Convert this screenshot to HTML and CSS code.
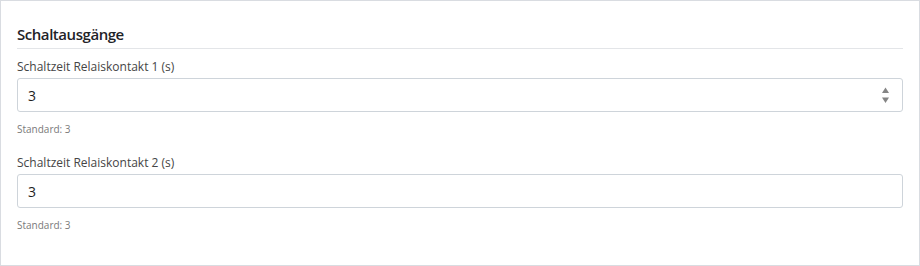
FILE: index.html
```html
<!DOCTYPE html>
<html lang="de">
<head>
<meta charset="utf-8">
<link rel="stylesheet" href="styles.css">
</head>
<body>
<div class="card">
  <h2 class="section-title">Schaltausgänge</h2>
  <div class="field">
    <label class="field-label">Schaltzeit Relaiskontakt 1 (s)</label>
    <div class="input has-spinner">
      <span class="value">3</span>
      <svg class="spinner" width="7" height="17" viewBox="0 0 7 17">
        <path d="M3.5 0.5 L7 6 L0 6 Z" fill="#858585"/>
        <path d="M0 10.5 L7 10.5 L3.5 16 Z" fill="#858585"/>
      </svg>
    </div>
    <div class="help">Standard: 3</div>
  </div>
  <div class="field">
    <label class="field-label">Schaltzeit Relaiskontakt 2 (s)</label>
    <div class="input">
      <span class="value">3</span>
    </div>
    <div class="help">Standard: 3</div>
  </div>
</div>
</body>
</html>
```
FILE: styles.css
```css
html, body {
  margin: 0;
  padding: 0;
  background: #ffffff;
}
body {
  font-family: "Open Sans", "Noto Sans", sans-serif;
  color: #212529;
}
.card {
  box-sizing: border-box;
  width: 920px;
  height: 266px;
  border: 1px solid #d9dce1;
  padding: 0 16px;
}
.section-title {
  margin: 24px 0 0;
  font-size: 15px;
  line-height: 18px;
  font-weight: 600;
  letter-spacing: -0.45px;
  color: #1f2328;
  padding-bottom: 5px;
  border-bottom: 1px solid #e3e5e8;
}
.field {
  display: flex;
  flex-direction: column;
}
.field-label {
  margin-top: 9px;
  font-size: 12px;
  line-height: 18px;
  color: #454545;
  display: block;
}
.input {
  box-sizing: border-box;
  margin-top: 2px;
  height: 34px;
  border: 1px solid #ced4da;
  border-radius: 3px;
  display: flex;
  align-items: center;
  justify-content: space-between;
  padding: 0 13px 0 10px;
}
.value {
  font-size: 14px;
  color: #1f1f1f;
}
.spinner {
  display: block;
}
.help {
  margin-top: 10px;
  margin-bottom: 9px;
  font-size: 10px;
  line-height: 14px;
  color: #7a7a7a;
}
```
